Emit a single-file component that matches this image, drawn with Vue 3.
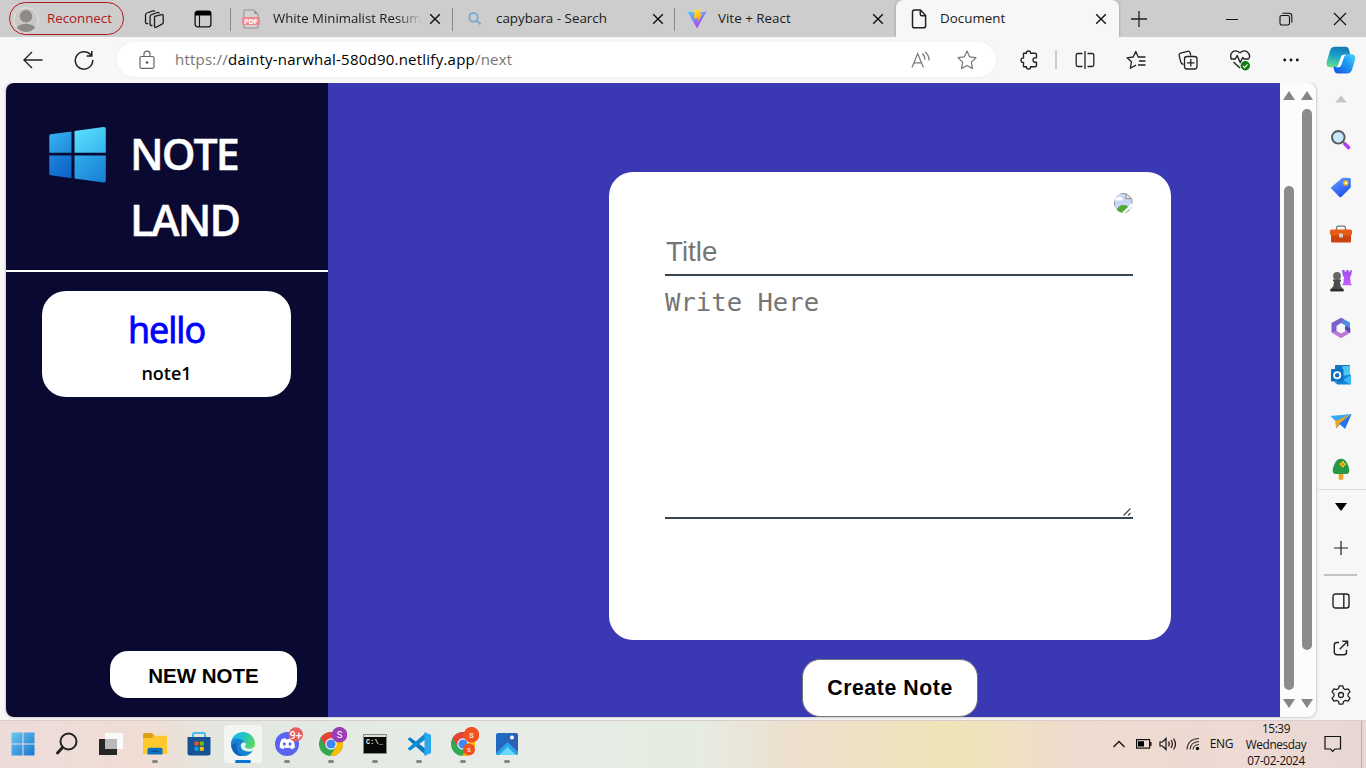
<script setup>
const tabs = [
  { id: 'pdf', title: 'White Minimalist Resum' },
  { id: 'search', title: 'capybara - Search' },
  { id: 'vite', title: 'Vite + React' },
  { id: 'doc', title: 'Document' }
]
</script>

<template>
  <div class="desktop">
    <header class="tabstrip">
      <div class="profile">
        <svg width="26" height="26" viewBox="0 0 26 26">
          <defs><clipPath id="av"><circle cx="13" cy="13" r="12" /></clipPath></defs>
          <circle cx="13" cy="13" r="12.2" fill="#c9c7c5" stroke="#e4e2e0" />
          <g clip-path="url(#av)" fill="#8d8a87"><circle cx="13" cy="9.3" r="6.2" /><ellipse cx="13" cy="23" rx="10" ry="6.2" /></g>
        </svg>
        <span class="reconnect">Reconnect</span>
      </div>
      <svg class="ic workspaces" width="20" height="20" viewBox="0 0 20 20" fill="none" stroke="#1b1b1b" stroke-width="1.3" stroke-linejoin="round">
        <path d="M10.800 7.300 17.600 5.600Q19.200 5.200 19.200 6.800V13.500q0 1.200-1.200 1.600l-5.800 3.100q-1.700.8-1.700-1V8.800q0-1.200.3-1.500Z" />
        <path d="M8.500 16.300q-2.400.700-2.400-1.200V7.500q0-1.500 1.400-1.900L13.500 3.500q1.500-.3 1.800 1" />
        <path d="M4.300 14.500q-2.800.4-2.800-1.500V6q0-1.500 1.500-2L9 1.900q1.500-.4 2 .6" />
      </svg>
      <svg class="ic tabact" width="18" height="18" viewBox="0 0 18 18"><rect x="1.100" y="1.200" width="15.800" height="15.600" rx="2.500" fill="none" stroke="#111" stroke-width="1.300" /><path d="M1 5.500V3.500Q1 1 3.500 1h11Q17 1 17 3.500v2Z" /><path d="M5.500 5v12" stroke="#111" stroke-width="1.100" /></svg>

      <div v-for="t in tabs" :key="t.id" class="tab" :class="t.id">
        <svg v-if="t.id === 'pdf'" width="20" height="20" viewBox="0 0 20 20">
          <path d="M3 1h10l4 4v14H3Z" fill="#d3d3d3" stroke="#8f8f8f" /><path d="M13 1v4h4Z" fill="#999" />
          <rect x="1" y="8" width="18" height="8" rx="1.500" fill="#f0868a" />
          <text x="10" y="14.500" text-anchor="middle" font-size="6.600" font-weight="700" fill="#fff" font-family="DejaVu Sans" textLength="14">PDF</text>
        </svg>
        <svg v-else-if="t.id === 'search'" width="16" height="16" viewBox="0 0 16 16" fill="none" stroke="#79a8d0" stroke-width="1.800"><circle cx="6.500" cy="6.300" r="4.300" /><path d="m9.700 9.500 3.800 3.800" stroke-width="2.300" /></svg>
        <svg v-else-if="t.id === 'vite'" width="20" height="20" viewBox="0 0 20 20">
          <defs>
            <linearGradient id="v1" x1="0" y1="0" x2=".6" y2="1"><stop stop-color="#41d1ff" /><stop offset="1" stop-color="#bd34fe" /></linearGradient>
            <linearGradient id="v2" x1=".4" y1="0" x2=".6" y2="1"><stop stop-color="#ffdd35" /><stop offset="1" stop-color="#ffa800" /></linearGradient>
          </defs>
          <path d="M.5 2.500 10 4l9.500-1.500L10 19.500Z" fill="url(#v1)" /><path d="m7.300 1.500 6.500-1.200-1 4.400 2.700-.4-5 9.700.8-5-4.100.8Z" fill="url(#v2)" />
        </svg>
        <svg v-else width="16" height="20" viewBox="0 0 16 20" fill="none" stroke="#222" stroke-width="1.500" stroke-linejoin="round"><path d="M1.500 3q0-1.900 2-1.900h6L14.600 6.500V17q0 1.800-1.900 1.800H3.400q-1.900 0-1.900-1.800Z" /><path d="M9.300 1.300v3.900q0 1.500 1.500 1.500h3.700" /></svg>
        <span class="title">{{ t.title }}</span>
        <svg class="x" width="12" height="12" viewBox="0 0 12 12" stroke="#111" stroke-width="1.400"><path d="m1.200 1.200 9.600 9.600m0-9.600-9.600 9.600" /></svg>
      </div>
      <svg class="plus" width="18" height="18" viewBox="0 0 18 18" stroke="#222" stroke-width="1.300"><path d="M9 1v16M1 9h16" /></svg>
      <div class="wincontrols">
        <svg width="14" height="14" viewBox="0 0 14 14" stroke="#111" fill="none"><path d="M1 7.500h12" /></svg>
        <svg width="14" height="14" viewBox="0 0 14 14" stroke="#111" fill="none" stroke-width="1.100"><rect x="1" y="3.500" width="9.500" height="9.500" rx="1.700" /><path d="M3.500 1.200h6.500q2.800 0 2.800 2.800v6.500" /></svg>
        <svg width="14" height="14" viewBox="0 0 14 14" stroke="#111" fill="none" stroke-width="1.100"><path d="m1 1 12 12M13 1 1 13" /></svg>
      </div>
    </header>

    <nav class="toolbar">
      <svg class="back" width="20" height="18" viewBox="0 0 20 18" fill="none" stroke="#222" stroke-width="1.400"><path d="M9 1 1 9l8 8M1 9h18.500" /></svg>
      <svg class="reload" width="20" height="20" viewBox="0 0 20 20" fill="none" stroke="#222" stroke-width="1.500"><path d="M17.200 5.500A8.700 8.700 0 1 0 18.700 10M17.800 1v5h-5.200" /></svg>
      <div class="address">
        <svg class="lock" width="16" height="20" viewBox="0 0 16 20" fill="none" stroke="#666" stroke-width="1.200"><rect x="1" y="6.500" width="14" height="11.800" rx="1.500" /><path d="M5 6.500V4q0-2.800 3-2.800T11 4v2.500" /><circle cx="8" cy="12.500" r="1.300" fill="#555" stroke="none" /></svg>
        <span class="url">https://<b>dainty-narwhal-580d90.netlify.app</b>/next</span>
        <svg class="read" width="20" height="18" viewBox="0 0 20 18" fill="none" stroke="#777" stroke-width="1.200"><path d="m1 16.500 5.700-14 5.700 14M3 11.800h7.400M11.200 2.500q2.800 2 2.700 6M14 1q4.200 3 4 8.500" /></svg>
        <svg class="star" width="20" height="20" viewBox="0 0 20 20" fill="none" stroke="#777" stroke-width="1.200" stroke-linejoin="round"><path d="m10 1 2.700 5.900 6.300.8-4.700 4.400 1.200 6.500L10 15.400l-5.500 3.200 1.200-6.500L1 7.700l6.300-.8Z" /></svg>
      </div>
      <div class="tools">
        <svg class="puzzle" width="18" height="20" viewBox="0 0 18 20" fill="none" stroke="#222" stroke-width="1.400" stroke-linejoin="round"><path d="M3.500 3.300h3q-.2-2.300 2-2.300t2 2.300H15q1.500 0 1.500 1.500v3q-3.500-.3-3.500 2.200t3.500 2.200v3q0 1.500-1.500 1.500h-4.500q.2 2.300-2 2.300t-2-2.300h-3V12.500Q1 12.600 1 10.200t2.500-2.300Z" /></svg>
        <i class="bar"></i>
        <svg width="20" height="20" viewBox="0 0 20 20" fill="none" stroke="#222" stroke-width="1.300"><path d="M10 1v18M7.500 3.500H3q-1.800 0-1.800 1.800v9.400q0 1.800 1.800 1.800h4.500M12.500 3.500H17q1.800 0 1.800 1.800v9.400q0 1.800-1.800 1.800h-4.500" /></svg>
        <svg width="20" height="20" viewBox="0 0 20 20" fill="none" stroke="#222" stroke-width="1.300" stroke-linejoin="round"><path d="M12.200 7 9.800 1.500 7.200 7 1 7.800l4.500 4-1.200 6.500 5.700-3.200M11.800 7H19.500M13 11h6.500M12 15h7.500" /></svg>
        <svg width="20" height="20" viewBox="0 0 20 20" fill="none" stroke="#222" stroke-width="1.300"><path d="M5.500 14.500Q3.300 14 2.800 12L1.200 5.800q-.5-2 1.500-2.600L9.500 1.300q2-.5 2.600 1.500l.7 2.700" /><rect x="6.500" y="6.500" width="12.500" height="12.500" rx="2.500" fill="#f7f7f7" /><path d="M12.800 9v7.500M9 12.800h7.500" /></svg>
        <svg width="22" height="22" viewBox="0 0 22 22" fill="none" stroke="#222" stroke-width="1.400" stroke-linejoin="round"><path d="M2.300 9.500Q.5 5.500 3.500 3t7.500.7q4-3.200 7.300-.7t1.800 6.500M1.500 10h4.700l2-3.500 3 7 2.500-5 1.300 1.500h5M4.500 13l6.500 6" /><circle cx="16.300" cy="16.800" r="4.700" fill="#107c10" stroke="none" /><path d="m14 17 1.600 1.600 3-3.200" stroke="#fff" stroke-width="1.100" /></svg>
        <svg width="18" height="4" viewBox="0 0 18 4" fill="#111"><circle cx="2.700" cy="2" r="1.400" /><circle cx="9" cy="2" r="1.400" /><circle cx="15.300" cy="2" r="1.400" /></svg>
      </div>
      <svg class="copilot" width="30" height="28" viewBox="0 0 30 28">
        <defs>
          <linearGradient id="c1" x1=".5" y1="0" x2=".3" y2="1"><stop stop-color="#1477b8" /><stop offset=".45" stop-color="#19a5c9" /><stop offset="1" stop-color="#6ade8a" /></linearGradient>
          <linearGradient id="c2" x1="0" y1=".9" x2="1" y2="0"><stop stop-color="#1650e0" /><stop offset=".55" stop-color="#1d9cf3" /><stop offset="1" stop-color="#4fd0fa" /></linearGradient>
        </defs>
        <path d="M9 .7h10.500q2.700 0 3.500 3l1.300 5h-5q-2 0-2.700 2.300L13.500 19q-1 2.300-3.500 2.300H4Q-.2 21.300.7 16L4 4.500Q5.200.700 9 .7Z" fill="url(#c1)" />
        <path d="M20 8.300h5q5 0 4.200 5l-3 10q-1.200 4.200-5.200 4.200h-9q-3 0-3.700-3l-1-3.700H10q2.200 0 3-2.500l2.700-7.500Q16.500 8.300 20 8.300Z" fill="url(#c2)" />
        <path d="M17 8.800h3.200q-1.700.7-2.200 2.500L15.500 18.500q-.9 2.800-3 2.800h-3q2-.2 2.800-2.700l2.500-7.300Q15.500 9.200 17 8.800Z" fill="#fff" />
      </svg>
    </nav>

    <main class="stage">
      <div class="viewport">
        <aside class="side">
          <div class="brand">
            <svg width="58" height="58" viewBox="0 0 58 58">
              <defs>
                <linearGradient id="w1" x2="1" y2="1"><stop stop-color="#35b4f2" /><stop offset="1" stop-color="#2089d9" /></linearGradient>
                <linearGradient id="w2" x2="1" y2="1"><stop stop-color="#5be2ff" /><stop offset="1" stop-color="#36b4ee" /></linearGradient>
                <linearGradient id="w3" x2="1" y2="1"><stop stop-color="#1d85dc" /><stop offset="1" stop-color="#0960c4" /></linearGradient>
                <linearGradient id="w4" x2="1" y2="1"><stop stop-color="#31ace9" /><stop offset="1" stop-color="#187dd5" /></linearGradient>
              </defs>
              <path d="M1.300 10Q1.300 8.500 2.800 8.300L23.500 5.400v21.300H1.300Z" fill="url(#w1)" /><path d="M26.500 5l29-4q2.300-.3 2.300 1.800v23.900H26.500Z" fill="url(#w2)" />
              <path d="M1.300 29.500H23.500v22.700l-20.700-3Q1.300 49 1.300 47.500Z" fill="url(#w3)" /><path d="M26.500 29.500h31.300v25.200q0 2-2.300 1.700L26.500 52.500Z" fill="url(#w4)" />
            </svg>
            <h1>NOTE<br>LAND</h1>
          </div>
          <article class="note"><h2>hello</h2><p>note1</p></article>
          <button class="new">NEW NOTE</button>
        </aside>
        <section class="editor">
          <div class="paper">
            <svg class="broken" width="19" height="20" viewBox="0 0 19 20">
              <defs><clipPath id="br"><ellipse cx="9.500" cy="10" rx="9.500" ry="10" /></clipPath></defs>
              <g clip-path="url(#br)"><path d="M.5.500H12.500l5.500 5V20H.5Z" fill="#c7d8f4" stroke="#8a8a8a" /><path d="M1 7q1-3 3.500-2.500Q7 2.500 8.500 5.500 10 7 8 7.500H1Z" fill="#fff" /><path d="M1 20q3-8 8-8t6 3v5Z" fill="#52a936" /><path d="M12 0v6H19V0Z" fill="#fff" /><path d="M12 .500v5.200h5.500Z" fill="#eee" stroke="#888" /><path d="m9 20.500 10-9.500" stroke="#fff" stroke-width="2.500" /></g>
            </svg>
            <div class="field title-field">Title</div>
            <div class="field body-field"><span>Write Here</span><svg width="10" height="10" viewBox="0 0 10 10" stroke="#444" stroke-width="1.200"><path d="m1.500 8.500 7-7M6 8.500l2.500-2.500" /></svg></div>
          </div>
          <button class="create">Create Note</button>
        </section>
        <div class="scroll inner"><i class="up"></i><i class="thumb"></i><i class="down"></i></div>
        <div class="scroll outer"><i class="up"></i><i class="thumb"></i><i class="down"></i></div>
      </div>
      <aside class="rail">
        <div class="cell r1"><svg width="12" height="8" viewBox="0 0 12 8"><path d="M6 .5 11.500 7Q11.500 7.500 11 7.500H1Q.5 7.500.5 7Z" fill="#c6c6c6" /></svg></div>
        <div class="cell"><svg width="22" height="22" viewBox="0 0 22 22"><path d="m15 15 3.500 3.500" stroke="#b43cf0" stroke-width="3.600" stroke-linecap="round" /><path d="m12.500 12.500 2 2" stroke="#777" stroke-width="2" /><circle cx="8.300" cy="8.300" r="6.300" fill="#c6e9fb" stroke="#595959" stroke-width="1.900" /></svg></div>
        <div class="cell"><svg width="22" height="22" viewBox="0 0 22 22"><defs><linearGradient id="tg" x2=".5" y2="1"><stop stop-color="#62a5ff" /><stop offset="1" stop-color="#2652ee" /></linearGradient></defs><path d="M1.500 11 11.500 2.500q1-.8 2-.7l6 .3q1.300 0 1.300 1.300v7q0 1-.8 1.800l-8.500 8.600q-1 1-2 .1L1.500 12.800Q.5 11.900 1.500 11Z" fill="url(#tg)" /><circle cx="15.800" cy="7" r="2" fill="#fff" stroke="#f8b900" stroke-width="1.500" /></svg></div>
        <div class="cell"><svg width="22" height="18" viewBox="0 0 22 18"><path d="M6.500 5V3q0-1.800 1.800-1.800h5.400q1.800 0 1.800 1.800v2" fill="none" stroke="#777" stroke-width="1.300" /><rect x="1" y="9" width="20" height="8.500" rx="1" fill="#c9440e" /><path d="M1.500 4.500h19q1.500 0 1.500 1.500v2.500q0 2-2 2H2q-2 0-2-2V6q0-1.500 1.500-1.500Z" fill="#e85b17" /><rect x="9" y="8.500" width="4" height="4" rx=".8" fill="#d2d2d2" /></svg></div>
        <div class="cell"><svg width="22" height="24" viewBox="0 0 22 24"><defs><linearGradient id="rk" y2="1" x2="0"><stop stop-color="#a04cf0" /><stop offset="1" stop-color="#c75dff" /></linearGradient></defs><path d="M12 1h2.500v1.500h2V1h2v1.500h2V1H22l-1 6.500h-1l.8 7 1.200 1.800H12l1.500-2.500.5-6.300h-1Z" fill="url(#rk)" /><circle cx="7" cy="7" r="3.900" fill="#666" /><path d="M3 10.500h8v2H9.800l1 5 2.700 2.800v2H.5v-2l2.700-2.800 1-5H3Z" fill="#4a4a4a" /><path d="M.5 20h13v2.300H.5Z" fill="#2d2d2d" /></svg></div>
        <div class="cell"><svg width="22" height="22" viewBox="0 0 22 22"><path d="M11 .8 20 5.500v9.500L15.300 12V8.500L11 6Z" fill="#4b91e6" /><path d="M11 .8 1.500 6v9.500q3 .5 5-1.500V9L11 6l3-3.800Z" fill="#7a60cc" /><path d="M1.500 15.500 11 21.300l9.200-5.500v-4.300L11 16.500l-4.500-2.700Z" fill="#bd78d8" /><path d="m15.300 9 4.900 2v5l-5.400-3.300Z" fill="#514bb8" /><circle cx="11" cy="11" r="3.700" fill="#f7f7f7" /></svg></div>
        <div class="cell"><svg width="22" height="22" viewBox="0 0 22 22"><rect x="5" y="1.500" width="15" height="18" rx="1.300" fill="#36a9e8" /><path d="M5 2q0-1 1-1h13q1 0 1 1v4H5Z" fill="#1579c2" /><path d="M12.500 2H20v9h-7.500Z" fill="#4cc8f5" /><path d="m6 19 8-7 7-1.500v8.700q0 1.300-1.300 1.300H7.500Z" fill="#1684d7" /><path d="m21 11-8 5 7 4.500q1 0 1-1.300Z" fill="#35baf2" /><rect x="1" y="5" width="12.500" height="12.500" rx="1.300" fill="#0870c6" /><circle cx="7.200" cy="11.200" r="3.100" fill="none" stroke="#fff" stroke-width="1.800" /></svg></div>
        <div class="cell"><svg width="22" height="18" viewBox="0 0 22 18"><path d="M.5 3 21.500 1 15 15.800 10 11.500 6 15.500 5.500 8Z" fill="#38a8f3" /><path d="M5.500 8 21.500 1 9.500 10.500 6.200 15.500Z" fill="#f6a21c" /><path d="M9.500 10.500 21.500 1 15 15.800Z" fill="#2674ed" /></svg></div>
        <div class="cell"><svg width="20" height="22" viewBox="0 0 20 22"><rect x="7.700" y="14" width="4.600" height="7.800" rx="1" fill="#eba529" /><path d="M10 .7q3.500 0 5.300 3 3 5 3 8.500 0 3.800-3 3.800H4.700q-3 0-3-3.800 0-3.500 3-8.500Q6.500.7 10 .7Z" fill="#249845" /><path d="M11.800 3.200v6M8.800 6.200h6" stroke="#f8c510" stroke-width="2.400" /><circle cx="11.800" cy="6.200" r="1" fill="#d26b00" /></svg></div>
        <hr>
        <div class="cell rd"><svg width="12" height="8" viewBox="0 0 12 8"><path d="M0 0h12L6.500 7.500h-1Z" fill="#000" /></svg></div>
        <div class="cell rp"><svg width="14" height="14" viewBox="0 0 14 14" stroke="#222" stroke-width="1.200"><path d="M7 0v14M0 7h14" /></svg></div>
        <b class="thick"></b>
        <div class="cell"><svg width="18" height="16" viewBox="0 0 18 16" fill="none" stroke="#222" stroke-width="1.400"><rect x="1" y="1" width="16" height="14" rx="2.500" /><path d="M11.800 1v14" /></svg></div>
        <div class="cell"><svg width="16" height="16" viewBox="0 0 16 16" fill="none" stroke="#222" stroke-width="1.400"><path d="M6 2.500H4Q1.300 2.500 1.300 5v7q0 2.700 2.700 2.700h7q2.500 0 2.500-2.500v-2.500M9.300 1.200h5.300v5.300M14.600 1.200 6.700 9.200" /></svg></div>
        <div class="cell"><svg width="20" height="20" viewBox="0 0 20 20" fill="none" stroke="#222" stroke-width="1.300" stroke-linejoin="round"><path d="M8.200.8h3.600l.7 2.700 1.900 1.100 2.700-.8 1.900 3.100-2 2v2.200l2 2-1.900 3.100-2.700-.8-1.900 1.100-.7 2.700H8.200l-.7-2.700-1.900-1.100-2.700.8L1 13.100l2-2V8.900l-2-2 1.900-3.100 2.700.8 1.900-1.100Z" /><circle cx="10" cy="10" r="2.500" /></svg></div>
      </aside>
    </main>

    <footer class="taskbar">
      <div class="apps">
        <div class="app plain"><svg width="24" height="24" viewBox="0 0 24 24"><defs><linearGradient id="st" x2="1" y2="1"><stop stop-color="#6cc7ef" /><stop offset="1" stop-color="#1677d0" /></linearGradient></defs><path d="M.5.500h11v11H.5Zm12 0h11v11h-11Zm-12 12h11v11H.5Zm12 0h11v11h-11Z" fill="url(#st)" /></svg></div>
        <div class="app plain"><svg width="24" height="24" viewBox="0 0 24 24" fill="none" stroke="#222" stroke-width="2"><circle cx="13.500" cy="9.500" r="8" /><path d="M7.500 15.500 2.500 21" stroke-width="3" stroke-linecap="round" /></svg></div>
        <div class="app plain"><svg width="24" height="24" viewBox="0 0 24 24"><rect x="0" y="7" width="18" height="16" fill="#262626" /><rect x="6" y="1" width="18" height="16" fill="#fafafa" /><path d="M6 7h12v10H6Z" fill="#b9b9b9" /></svg></div>
        <div class="app run"><svg width="24" height="24" viewBox="0 0 24 24"><path d="M0 2.500Q0 1 1.500 1H9l2.500 3-2 2H0Z" fill="#dda018" /><path d="M0 6h8.500L11 3.700h12q1 0 1 1V22H0Z" fill="#fec92e" /><path d="M4.500 22.500v-5q0-1.800 1.800-1.800h11.400q1.800 0 1.800 1.800v5Z" fill="#0e70bf" /><path d="M8 19.300h8" stroke="#075393" stroke-width="1.400" /></svg></div>
        <div class="app plain"><svg width="24" height="24" viewBox="0 0 24 24"><path d="M6 6V2.500Q6 1 7.500 1h9Q18 1 18 2.500V6" fill="none" stroke="#43bdf0" stroke-width="2" /><path d="M.5 5h23v16q0 2.500-2.500 2.500H3Q.5 23.500.5 21Z" fill="#155295" /><path d="M7.500 9.500h4v4h-4Z" fill="#f25022" /><path d="M12.800 9.500h4v4h-4Z" fill="#7fba00" /><path d="M7.500 14.800h4v4h-4Z" fill="#00a4ef" /><path d="M12.800 14.800h4v4h-4Z" fill="#ffb900" /></svg></div>
        <div class="app active"><svg width="26" height="26" viewBox="0 0 26 26"><defs><linearGradient id="e1" x2="1" y2=".5"><stop stop-color="#1bb1ea" /><stop offset=".5" stop-color="#24c2c9" /><stop offset="1" stop-color="#5fdb55" /></linearGradient></defs><circle cx="13" cy="13" r="12" fill="url(#e1)" /><path d="M1 13q0-5.500 6-5.500 5.500 0 8 4.500-4-1-4 3 .5 4.500 5.500 5.500 4 .5 6.700-1.500Q19.500 25 13 25 2 24.500 1 13Z" fill="#1681d6" /><path d="M7 12q-2.500 7.500 5 12.900Q4 25.500 1.500 16q1-4 5.500-4Z" fill="#1660b8" /><path d="M15 11.500q1.700 1.700-.3 4.500 1.500 2 5 1.800 4-.3 5-3.300.5 6-5.500 6-8.500-.5-8.500-6 .5-3.500 4.300-3Z" fill="#e8f4f4" /></svg></div>
        <div class="app run"><svg width="30" height="30" viewBox="0 0 30 30"><circle cx="14" cy="17" r="12" fill="#5865f2" /><path d="M8.500 12.500q2-1.200 3.800-1.300l.6 1h2.700l.6-1q1.900.2 3.700 1.300 2.100 4 2 8-2 1.500-3.800 1.700l-1-1.700q-3 1-5.700 0l-1 1.700q-2-.3-3.800-1.700-.2-4.500 1.900-8Z" fill="#fff" /><ellipse cx="11.300" cy="17" rx="1.500" ry="1.700" fill="#5865f2" /><ellipse cx="17" cy="17" rx="1.500" ry="1.700" fill="#5865f2" /><circle cx="22.800" cy="7.500" r="7.200" fill="#e2605f" /><text x="22.800" y="11.500" font-size="10.500" font-weight="500" fill="#fff" text-anchor="middle" font-family="Roboto" textLength="12">9+</text></svg></div>
        <div class="app run"><svg width="30" height="30" viewBox="0 0 30 30"><circle cx="14" cy="17" r="12" fill="#33a853" /><path d="M3.600 11A12 12 0 0 1 24.400 11H14Z" fill="#e94335" /><path d="M3.600 11 9 20 14 11Z" fill="#e94335" /><path d="M24.400 11A12 12 0 0 1 13 29l6-9V11Z" fill="#fbbc05" /><circle cx="14" cy="17" r="5.700" fill="#fff" /><circle cx="14" cy="17" r="4.600" fill="#4285f4" /><circle cx="22.500" cy="7.700" r="7.800" fill="#9c3db8" /><text x="22.500" y="11.300" font-size="9.500" fill="#fff" text-anchor="middle" font-family="Roboto">S</text></svg></div>
        <div class="app run"><svg width="24" height="20" viewBox="0 0 24 20"><rect x=".5" y=".5" width="23" height="19" fill="#080808" stroke="#888" /><rect x="1" y="1" width="22" height="2" fill="#ddd" /><text x="3" y="9.500" font-size="6.500" font-weight="700" fill="#fff" font-family="Liberation Mono" textLength="17">C:\_</text></svg></div>
        <div class="app run"><svg width="26" height="26" viewBox="0 0 26 26"><path d="M1.500 8 4 6.300 20 18v6.500Z" fill="#087bc4" /><path d="M1.500 17.800 4 19.700 20 8V1.500Z" fill="#0b8bd3" /><path d="M18.500 1 25 4v18l-6.500 3Z" fill="#29a9ec" /></svg></div>
        <div class="app run"><svg width="30" height="30" viewBox="0 0 30 30"><circle cx="14" cy="17" r="12" fill="#33a853" /><path d="M3.600 11A12 12 0 0 1 24.400 11H14Z" fill="#e94335" /><path d="M3.600 11 9 20 14 11Z" fill="#e94335" /><path d="M24.400 11A12 12 0 0 1 13 29l6-9V11Z" fill="#fbbc05" /><circle cx="14" cy="17" r="5.700" fill="#fff" /><circle cx="14" cy="17" r="4.600" fill="#4285f4" /><circle cx="22.500" cy="7.700" r="7.800" fill="#f1511f" /><text x="22.500" y="11" font-size="9.500" fill="#fff" text-anchor="middle" font-family="Roboto">s</text><circle cx="20" cy="22.500" r="6" fill="#f1511f" /><text x="20" y="25.300" font-size="7.500" fill="#fff" text-anchor="middle" font-family="Roboto">s</text></svg></div>
        <div class="app run"><svg width="24" height="24" viewBox="0 0 24 24"><defs><linearGradient id="ph" x2="1" y2="1"><stop stop-color="#1571c8" /><stop offset="1" stop-color="#4054a8" /></linearGradient><clipPath id="pc"><rect x="1" y="1" width="22" height="22" rx="2" /></clipPath></defs><g clip-path="url(#pc)"><rect width="24" height="24" fill="url(#ph)" /><path d="m0 22 12.500-12L24 21v3H0Z" fill="#27a5ea" /><path d="m3 24 9.500-9L22 24Z" fill="#66daf8" /></g><circle cx="17" cy="5.500" r="2" fill="#fff" /></svg></div>
      </div>
      <div class="tray">
        <svg class="t1" width="12" height="8" viewBox="0 0 12 8" fill="none" stroke="#111" stroke-width="1.300"><path d="m.5 7 5.500-5.500L11.500 7" /></svg>
        <svg class="t2" width="16" height="10" viewBox="0 0 16 10"><rect x=".6" y=".6" width="13" height="8.500" fill="none" stroke="#111" stroke-width="1.200" /><path d="M2 2.200h6v5.300H2ZM14.200 3h1.300v4h-1.300Z" /></svg>
        <svg class="t3" width="18" height="14" viewBox="0 0 18 14" fill="none" stroke="#111" stroke-width="1.200"><path d="M1 5h2.500L7 1.500v11L3.500 9H1ZM9.500 4.700q1.500 2.300 0 4.600M12 3q2.700 4 0 8M14.500 1.500q4 5.500 0 11" /></svg>
        <svg class="t4" width="14" height="14" viewBox="0 0 14 14" fill="none" stroke="#333" stroke-width="1.100"><path d="M1 12.500Q1.500 2 13 1.500M4 12.500Q4.500 5 13 4.500M7 12.500Q7.500 8 13 7.500" /><circle cx="11.500" cy="11.500" r="1.700" fill="#111" stroke="none" /></svg>
        <span class="lang">ENG</span>
        <div class="clock"><span class="c1">15:39</span><span class="c2">Wednesday</span><span class="c3">07-02-2024</span></div>
        <svg class="t5" width="18" height="18" viewBox="0 0 18 18" fill="none" stroke="#111" stroke-width="1.200"><path d="M1 1.500h15.500V14H11l-2.300 2.300L6.500 14H1Z" /></svg>
        <i class="peek"></i>
      </div>
    </footer>
  </div>
</template>

<style>
body { margin: 0; overflow: hidden; }
</style>

<style scoped>
* { box-sizing: border-box; }
.desktop { width: 1366px; height: 768px; display: flex; flex-direction: column; background: #f7f7f7; font-family: "Open Sans", "Noto Sans", sans-serif; overflow: hidden; }
svg { display: block; flex: none; }
.tabstrip { height: 37px; background: #cdcdcd; display: flex; align-items: center; flex: none; }
.profile { width: 115px; height: 33px; margin-left: 9px; border: 1px solid #b1181e; border-radius: 17px; display: flex; align-items: center; padding-left: 3px; }
.profile svg { margin-top: 2px; }
.reconnect { color: #b1181e; font-size: 13.300px; margin: -2px 0 0 8px; white-space: nowrap; }
.workspaces { margin-left: 20px; }
.tabact { margin-left: 30px; }
.tab { height: 37px; display: flex; align-items: center; font-size: 13.400px; color: #1b1b1b; position: relative; flex: none; }
.tab.pdf { width: 222px; margin-left: 18px; padding-left: 11px; }
.tab.search { width: 222px; padding-left: 15px; }
.tab.vite { width: 222px; padding-left: 13px; }
.tab.doc { width: 223px; padding-left: 15px; background: #f7f7f7; border-radius: 7px 7px 0 0; box-shadow: 0 0 3px rgba(0, 0, 0, .3); }
.tab:not(.doc)::before { content: ""; position: absolute; left: 0; top: 8px; width: 1px; height: 23px; background: #888; }
.title { white-space: nowrap; flex: 1; margin: -2px 0 0 11px; }
.tab.search .title { margin-left: 13px; }
.tab.vite .title { margin-left: 11px; }
.tab.doc .title { margin-left: 13px; }
.pdf .title { font-size: 13.200px; width: 148px; flex: none; margin-left: 12px; background: linear-gradient(90deg, #1b1b1b 84%, #c8c8c8 100%); -webkit-background-clip: text; background-clip: text; color: transparent; }
.x { margin: 1px 12px 0 10px; }
.pdf .x { margin-left: auto; margin-right: 11px; }
.search .x { margin-right: 10px; }
.plus { margin-left: 11px; }
.wincontrols { margin-left: auto; display: flex; gap: 40px; padding-right: 19px; }
.toolbar { height: 46px; background: #f7f7f7; display: flex; align-items: center; flex: none; position: relative; z-index: 1; padding-bottom: 1px; }
.back { margin-left: 23px; }
.reload { margin-left: 31px; }
.address { margin-left: 23px; width: 879px; height: 35px; border-radius: 18px; background: #fff; display: flex; align-items: center; box-shadow: 0 0 3px rgba(0, 0, 0, .06); }
.lock { margin: 0 0 0 22px; }
.url { margin: -1px 0 0 20px; font-size: 15px; letter-spacing: .23px; color: #757575; white-space: nowrap; }
.url b { font-weight: 400; color: #000; }
.read { margin-left: auto; }
.star { margin: 0 19px 0 26px; }
.tools { margin-left: 24px; width: 280px; display: flex; align-items: center; justify-content: space-between; }
.bar { width: 2px; height: 19px; background: #ccc; margin: 0 -13px 0 -14px; }
.copilot { margin-left: 26px; margin-top: 1px; }
.stage { height: 637px; display: flex; flex: none; }
.viewport { width: 1310px; height: 634px; margin-left: 6px; display: flex; background: #fcfcfc; border-radius: 8px; overflow: hidden; box-shadow: 0 0 3px rgba(0, 0, 0, .35); flex: none; }
.side { width: 322px; background: #090932; display: flex; flex-direction: column; }
.brand { height: 189px; border-bottom: 2px solid #fff; display: flex; padding: 43px 0 0 42px; }
h1 { margin: -5px 0 0 24px; color: #fff; font-size: 43px; line-height: 66px; font-weight: 600; letter-spacing: -2px; white-space: nowrap; -webkit-text-stroke: .4px #fff; }
.note { width: 249px; height: 106px; margin: 19px 0 0 36px; background: #fff; border-radius: 24px; text-align: center; }
h2 { margin: 11px 0 0; color: #00f; font: 500 36px/56px "Open Sans", sans-serif; letter-spacing: -1px; -webkit-text-stroke: .9px #00f; }
.note p { margin: 1px 0 0; color: #000; font-weight: 600; font-size: 18px; line-height: 28px; }
button { border: 0; background: #fff; color: #000; font-family: "Liberation Sans", Arial, sans-serif; font-weight: 700; padding: 0; }
.new { width: 187px; height: 47px; margin: auto 0 19px 104px; border-radius: 18px; font-size: 20.500px; padding-top: 2px; }
.editor { width: 952px; background: #3a39b3; padding: 89px 0 0 281px; }
.paper { width: 562px; height: 468px; background: #fff; border-radius: 24px; padding: 21px 38px 0 56px; }
.broken { margin-left: auto; }
.field { border-bottom: 2px solid #36454f; color: #757575; position: relative; }
.title-field { height: 63px; padding: 23px 0 0 1px; font: 27.700px/31px "Liberation Sans", Arial, sans-serif; }
.body-field { height: 243px; padding-top: 11px; font: 25.600px/31px "DejaVu Sans Mono", monospace; }
.body-field svg { position: absolute; right: 1px; bottom: 0; }
.create { display: block; width: 176px; height: 58px; margin: 19px 0 0 193px; border: 1px solid #767676; border-radius: 18px; font-size: 21.300px; letter-spacing: .55px; }
.scroll { width: 18px; display: flex; flex-direction: column; align-items: center; padding: 8px 0 9px; }
.up { border: 6px solid transparent; border-top: 0; border-bottom: 9px solid #858585; }
.down { border: 6px solid transparent; border-bottom: 0; border-top: 9px solid #858585; margin-top: auto; }
.thumb { width: 10px; border-radius: 5px; background: #8b8b8b; }
.inner .thumb { height: 504px; margin-top: 86px; }
.outer .thumb { height: 541px; margin-top: 9px; }
.rail { flex: 1; display: flex; flex-direction: column; align-items: center; }
.cell { height: 47px; width: 50px; padding-right: 1px; display: flex; align-items: center; justify-content: center; flex: none; }
.r1 { height: 33px; padding-bottom: 1px; }
.rail hr { width: 100%; height: 1px; margin: -3px 0 0; border: 0; background: #ddd; flex: none; }
.rd { height: 35px; padding-bottom: 1px; }
.rp { height: 49px; padding-bottom: 3px; }
.thick { width: 33px; height: 2px; background: #c2c2c2; flex: none; margin: 0 1px 1px 0; }
.taskbar { height: 48px; display: flex; flex: none; border-top: 1px solid #d8cfcd; background: linear-gradient(90deg, #ecdcda 0, #f0ddd3 150px, #e2e7e0 220px, #e6ebe7 440px, #e7ece2 700px, #ecdfce 790px, #efe5b8 950px, #efdbcf 1080px, #eed9d4 1250px, #e7d8d4); justify-content: space-between; }
.apps { display: flex; padding-left: 1px; }
.app { width: 44px; padding: 0 1px 1px 0; display: flex; justify-content: center; align-items: center; position: relative; }
.active::before { content: ""; position: absolute; left: 3px; top: 4px; width: 38px; height: 38px; border-radius: 4px; background: #f2f5f2; }
.active svg { position: relative; }
.run::after, .active::after { content: ""; position: absolute; left: 19px; top: 39px; width: 6px; height: 3px; border-radius: 2px; background: #858585; }
.active::after { left: 14px; width: 16px; background: #0a75cf; }
.run svg[height="30"] { margin-top: -4px; margin-left: 3px; }
.tray { display: flex; align-items: center; color: #111; font-size: 12px; padding-bottom: 1px; }
.t2 { margin-left: 11px; }
.t3 { margin-left: 7px; }
.t4 { margin-left: 9px; }
.lang { margin: -1px 0 0 10px; font-size: 12px; letter-spacing: -.4px; }
.clock { width: 64px; margin: -1px 0 0 11px; display: flex; flex-direction: column; align-items: center; line-height: 16px; font-size: 11.800px; letter-spacing: -.4px; white-space: nowrap; }
.t5 { margin-left: 16px; }
.peek { width: 1px; height: 47px; background: #bbaeab; margin: 0 4px 0 19px; }
</style>
